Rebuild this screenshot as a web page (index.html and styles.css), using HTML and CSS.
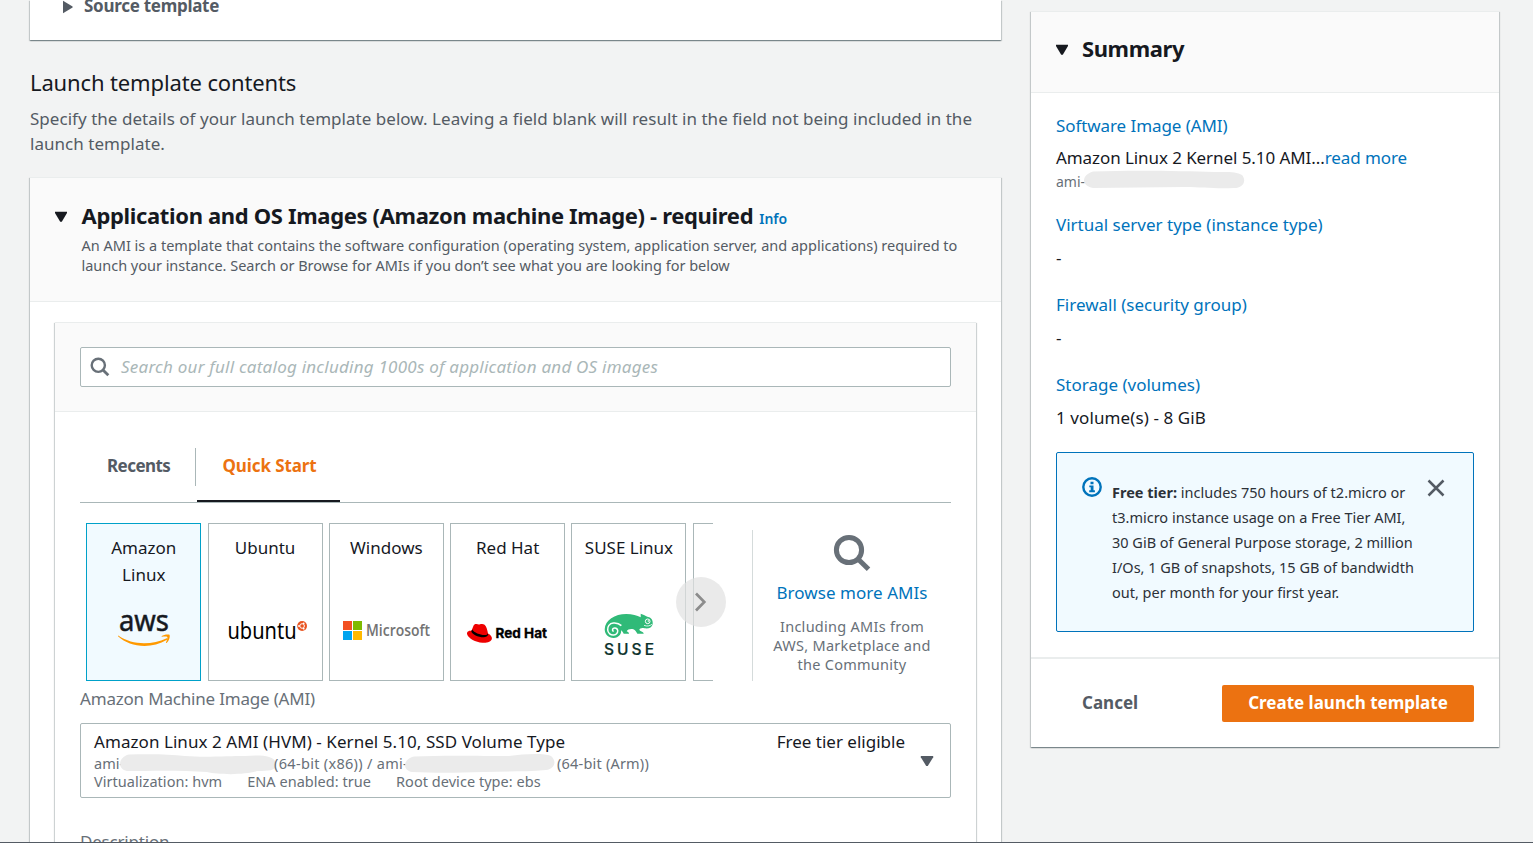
FILE: index.html
```html
<!DOCTYPE html>
<html lang="en">
<head>
<meta charset="utf-8">
<title>Create launch template</title>
<link rel="stylesheet" href="styles.css">
</head>
<body>
<div class="page">
  <main class="main">
    <section class="card source">
      <svg class="caret-right" width="12" height="14" viewBox="0 0 12 14"><path d="M1 .8 L10.6 6.6 V7.4 L1 13.2Z" fill="#545b64"/></svg>
      <span class="source-title">Source template</span>
    </section>

    <h2 class="contents-title">Launch template contents</h2>
    <p class="contents-desc">Specify the details of your launch template below. Leaving a field blank will result in the field not being included in the<br>launch template.</p>

    <section class="card images">
      <header class="images-head">
        <svg class="caret" width="14" height="12" viewBox="0 0 14 12"><path d="M1 .8H13V2L7.8 10.8H6.2L1 2Z" fill="#16191f"/></svg>
        <div>
          <h2 class="images-title"><span class="t">Application and OS Images (Amazon machine Image) - required</span><a class="info">Info</a></h2>
          <p class="images-desc">An AMI is a template that contains the software configuration (operating system, application server, and applications) required to<br><span class="l2">launch your instance. Search or Browse for AMIs if you don’t see what you are looking for below</span></p>
        </div>
      </header>

      <div class="card catalog">
        <div class="catalog-head">
          <div class="search">
            <svg width="20" height="20" viewBox="0 0 20 20" fill="none" stroke="#687078"><circle cx="8.3" cy="8.3" r="6.6" stroke-width="2.4"/><path d="M13 13l5.3 5.3" stroke-width="2.8"/></svg>
            <span class="placeholder">Search our full catalog including 1000s of application and OS images</span>
          </div>
        </div>
        <div class="catalog-body">
          <nav class="tabs">
            <a class="tab recents"><span>Recents</span></a>
            <a class="tab active"><span>Quick Start</span></a>
          </nav>
          <div class="quick">
            <div class="strip">
              <div class="tiles">
                <div class="tile selected"><span class="name">Amazon<br>Linux</span>
                  <svg viewBox="87 600 113 70"><text x="119" y="631" textLength="50" lengthAdjust="spacingAndGlyphs" class="logo-aws">aws</text><path d="M118.3 635.6C126 641 135 643.3 144 643.3C152 643.3 160 641.5 166.2 638.4C167.5 637.8 168 639 167 639.8C160 644 152 646 144.500 646C134 646 125 642.500 118 636.300Z" fill="#ff9900"/><path d="M161.500 636.200C164 634.300 168 634 169.600 634.800C170.300 637 169 641 166.600 643C166 643.300 165.800 643 166 642.500C167 640 167.800 637.600 167.300 636.900C166.600 636.100 164 636.400 161.800 636.700Z" fill="#ff9900"/></svg>
                </div>
                <div class="tile"><span class="name">Ubuntu</span>
                  <svg viewBox="208.500 600 113 70"><text x="227" y="639" textLength="69" lengthAdjust="spacingAndGlyphs" class="logo-ubuntu">ubuntu</text><circle cx="301.600" cy="626" r="4.900" fill="#e95420"/><circle cx="301.600" cy="626" r="2.300" fill="none" stroke="#fff" stroke-width="1"/><g fill="#fff"><circle cx="298.500" cy="626" r=".9"/><circle cx="303.200" cy="623.300" r=".9"/><circle cx="303.200" cy="628.700" r=".9"/></g></svg>
                </div>
                <div class="tile"><span class="name">Windows</span>
                  <svg viewBox="330 600 113 70"><path d="M343 621h9v9h-9z" fill="#f25022"/><path d="M353 621h9v9h-9z" fill="#7fba00"/><path d="M343 631h9v9h-9z" fill="#00a4ef"/><path d="M353 631h9v9h-9z" fill="#ffb900"/><text x="366" y="636" textLength="64" lengthAdjust="spacingAndGlyphs" class="logo-ms">Microsoft</text></svg>
                </div>
                <div class="tile"><span class="name">Red Hat</span>
                  <svg viewBox="451 600 113 70"><path d="M471.600 630.500L473.500 625.800C474 624.500 475.200 623.800 476.500 624C477.800 624.200 478.500 624.800 480 624.300C481.500 623.700 483.300 623.700 484.600 624.700C486.400 626 487.300 630 488 633.400C490.600 634.700 492.200 636.700 491.900 638.800C491.300 642 487 643 482.500 642.700C475.500 642.200 468.500 638.300 467.200 634.400C466.400 632 468.300 630.700 471.600 630.500Z" fill="#e00"/><path d="M472.100 629.500C474 632.500 480 635 484.500 635C486.500 635 487.600 634.500 487.900 633.200L488.100 634.600C487.700 636.400 486 637.200 483.600 637.200C478 637.200 472 634 471.300 631.400Z" fill="#000"/><text x="495.500" y="638.200" textLength="51.500" lengthAdjust="spacingAndGlyphs" class="logo-rh">Red Hat</text></svg>
                </div>
                <div class="tile"><span class="name">SUSE Linux</span>
                  <svg viewBox="572.300 600 113 70"><g transform="translate(560 510) scale(.3333)"><path d="M135 358C136 330 165 312 200 312C218 312 232 317 243 322L243 311C251 313 258 318 265 321C275 323 280 330 279 342C277 353 266 357 254 355C245 353 240 356 239 359C242 365 252 364 252 371H233C229 365 227 360 221 358C211 356 204 359 201 364C205 366 208 368 208 371H192C190 366 186 361 180 356L184 358C187 371 177 384 162 384C146 384 135 373 135 358Z" fill="#30ba78"/><path d="M185 347C179 341 171 338 161 339C149 340 143 350 144 360C145 370 153 376 162 375C170 374 175 368 174 361C173 355 166 352 161 355C157 358 158 363 162 364" fill="none" stroke="#fff" stroke-width="4.500"/><circle cx="264" cy="334" r="7" fill="none" stroke="#fff" stroke-width="3"/><circle cx="266" cy="333" r="2.500" fill="#fff"/><path d="M253 346C262 350 270 348 277 343" fill="none" stroke="#fff" stroke-width="2.500"/></g><text x="604.300" y="655.400" textLength="50" class="logo-suse">SUSE</text></svg>
                </div>
                <div class="tile"></div>
              </div>
              <span class="next"><svg width="14" height="22" viewBox="0 0 14 22"><path d="M2 2.500L10.300 11L2 19.500" fill="none" stroke="#8c8c8c" stroke-width="2.700"/></svg></span>
            </div>
            <div class="browse">
              <svg width="38" height="38" viewBox="0 0 38 38" fill="none" stroke="#687078"><circle cx="16" cy="16" r="12.600" stroke-width="5"/><path d="M25 25l10.500 10.200" stroke-width="5"/></svg>
              <a class="browse-link">Browse more AMIs</a>
              <p class="browse-text">Including AMIs from<br>AWS, Marketplace and<br>the Community</p>
            </div>
          </div>
          <div class="field-label">Amazon Machine Image (AMI)</div>
          <div class="select">
            <div class="select-text">
              <div class="ami-name">Amazon Linux 2 AMI (HVM) - Kernel 5.10, SSD Volume Type</div>
              <div class="ami-ids"><span class="ami">ami-</span><svg class="blot a" width="158" height="22" viewBox="0 0 158 22"><path d="M10 1.500C30 1 50 1 66 3C85 4.500 110 3 126 3C140 2 155 2 157 10C158 18 150 18 138 18C128 22 100 22 88 19C60 17 30 18 8 18C-2 16-1 4 10 1.500Z" fill="#ebebeb"/></svg><span class="x86">(64-bit (x86)) / ami-</span><svg class="blot b" width="152" height="22" viewBox="0 0 152 22"><path d="M10 3.500C40 2 80 3 105 3C120 1 140 0 147 3C153 8 151 16 142 17C120 19 100 18 80 19C50 20 30 20 8 19C-2 17-1 6 10 3.500Z" fill="#ebebeb"/></svg><span class="arm">(64-bit (Arm))</span></div>
              <div class="ami-meta"><span>Virtualization: hvm</span><span>ENA enabled: true</span><span>Root device type: ebs</span></div>
            </div>
            <div class="eligible">Free tier eligible</div>
            <svg class="select-caret" width="14" height="12" viewBox="0 0 14 12"><path d="M.8 1H13.200V2.200L7.800 11H6.200L.8 2.200Z" fill="#545b64"/></svg>
          </div>
          <div class="field-label description">Description</div>
        </div>
      </div>
    </section>
  </main>

  <aside class="card summary">
    <header class="summary-head">
      <svg class="caret" width="14" height="12" viewBox="0 0 14 12"><path d="M1 .8H13V2L7.800 10.800H6.200L1 2Z" fill="#16191f"/></svg>
      <h2>Summary</h2>
    </header>
    <div class="summary-body">
      <div class="item first">
        <a class="tight">Software Image (AMI)</a>
        <div class="value tight">Amazon Linux 2 Kernel 5.10 AMI...<a>read more</a></div>
        <div class="summary-ami"><span>ami-</span><svg width="162" height="20" viewBox="0 0 162 20"><path d="M9 1.500C50 0 100 1 130 2C140 2 152 1 158 5C163 11 159 18 150 18C130 19 120 17 100 17C70 17 40 18 9 18C-3 16-3 5 9 1.500Z" fill="#ebebeb"/></svg></div>
      </div>
      <div class="item"><a>Virtual server type (instance type)</a><div class="value">-</div></div>
      <div class="item"><a>Firewall (security group)</a><div class="value">-</div></div>
      <div class="item"><a>Storage (volumes)</a><div class="value loose">1 volume(s) - 8 GiB</div></div>
      <div class="alert">
        <svg class="alert-icon" width="20" height="20" viewBox="0 0 20 20"><circle cx="10" cy="10" r="8.700" fill="none" stroke="#0073bb" stroke-width="2.400"/><path d="M8.500 4.800h3v2.500h-3zM7.300 8.500h4.200v4.800h1.400v1.900H7.200v-1.900h1.500v-3H7.300z" fill="#0073bb"/></svg>
        <p class="alert-text"><b>Free tier:</b> includes 750 hours of t2.micro or<br>t3.micro instance usage on a Free Tier AMI,<br>30 GiB of General Purpose storage, 2 million<br>I/Os, 1 GB of snapshots, 15 GB of bandwidth<br>out, per month for your first year.</p>
        <svg class="alert-close" width="18" height="18" viewBox="0 0 18 18"><path d="M1.500 1.500l15 15M16.500 1.500l-15 15" stroke="#545b64" stroke-width="2.500"/></svg>
      </div>
    </div>
    <footer class="summary-foot">
      <a class="cancel">Cancel</a>
      <a class="create"><span>Create launch template</span></a>
    </footer>
  </aside>
</div>
</body>
</html>
```
FILE: styles.css
```css
* { box-sizing: border-box; }
body {
  margin: 0;
  background: #f2f3f3;
  color: #16191f;
  font: 17px/25px "Noto Sans", "Open Sans", sans-serif;
}
h2, p { margin: 0; }
svg { display: block; flex: none; }
a { color: #0073bb; text-decoration: none; }

.page {
  width: 1533px;
  height: 843px;
  overflow: hidden;
  display: flex;
  align-items: flex-start;
  gap: 30px;
  padding-left: 30px;
  border-bottom: 1px solid #545b64;
  white-space: nowrap;
}
.main { width: 971px; flex: none; }
.card {
  background: #fff;
  border-top: 1px solid #eaeded;
  box-shadow: 0 1px 1px 0 rgba(0, 28, 36, .3), 1px 1px 1px 0 rgba(0, 28, 36, .15), -1px 1px 1px 0 rgba(0, 28, 36, .15);
}

.source {
  height: 40px;
  border-top: 0;
  display: flex;
  align-items: flex-start;
  padding-left: 32px;
}
.source-title { margin: -7px 0 0 10px; font-weight: 700; color: #545b64; letter-spacing: -.28px; }

.contents-title { margin-top: 27px; font-size: 22px; line-height: 30px; font-weight: 400; letter-spacing: -.13px; }
.contents-desc { margin-top: 9px; color: #545b64; letter-spacing: .037px; }

.images { margin-top: 21px; height: 700px; }
.images-head {
  height: 124px;
  display: flex;
  padding: 21px 0 0 24px;
  background: #fafafa;
  border-bottom: 1px solid #eaeded;
}
.images-head .caret { margin: 12px 13.5px 0 0; }
.images-title { display: flex; align-items: baseline; font-size: 22px; line-height: 32px; letter-spacing: -.34px; }
.info { margin-left: 6px; font-size: 14px; font-weight: 600; letter-spacing: 0; }
.images-desc { margin-top: 0; font-size: 14.5px; line-height: 20px; color: #545b64; }
.images-desc .l2 { letter-spacing: -.02px; }

.catalog { margin: 20px 25px 0; height: 560px; }
.catalog-head { height: 89px; padding: 24px 25px 0; background: #fafafa; border-bottom: 1px solid #eaeded; }
.search {
  height: 40px;
  display: flex;
  align-items: center;
  padding-left: 9px;
  gap: 11px;
  background: #fff;
  border: 1px solid #aab7b8;
  border-radius: 2px;
}
.placeholder { margin-top: -2px; color: #aab7b8; font-style: italic; letter-spacing: .235px; }
.catalog-body { padding: 36px 25px 0; }

.tabs { height: 55px; display: flex; border-bottom: 1px solid #aab7b8; font-weight: 700; }
.tab { color: #545b64; line-height: 36px; }
.recents { width: 116px; height: 38px; padding-left: 27px; border-right: 1px solid #aab7b8; letter-spacing: -.55px; }
.active { width: 143px; height: 54px; margin-left: 1px; padding-left: 25.5px; color: #ec7211; border-bottom: 2px solid #16191f; letter-spacing: -.1px; }

.quick { display: flex; margin-top: 20px; height: 158px; }
.strip { position: relative; width: 633px; padding-left: 6.25px; }
.tiles { display: flex; gap: 6.3px; overflow: hidden; }
.tile {
  flex: none;
  width: 115px;
  height: 158px;
  border: 1px solid #aab7b8;
  padding-top: 10px;
  display: flex;
  flex-direction: column;
  justify-content: space-between;
  text-align: center;
  line-height: 27px;
}
.tile svg { width: 113px; height: 70px; margin-bottom: 10px; }
.selected { background: #f1faff; border-color: #00a1c9; }
.next {
  position: absolute;
  left: 596px;
  top: 54px;
  width: 50px;
  height: 50px;
  padding: 14px 0 0 18px;
  border-radius: 50%;
  background: rgba(225, 225, 225, .7);
}
.logo-aws { font: 400 29px "Noto Sans", sans-serif; fill: #16191f; stroke: #16191f; stroke-width: .5px; }
.logo-ubuntu { font: 400 23px "Noto Sans", sans-serif; fill: #000; }
.logo-ms { font: 600 16px "Open Sans", sans-serif; fill: #737373; }
.logo-rh { font: 700 13.5px Inter, sans-serif; fill: #000; stroke: #000; stroke-width: .3px; }
.logo-suse { font: 500 15.5px Inter, sans-serif; fill: #0c322c; stroke: #0c322c; stroke-width: .2px; }

.browse {
  flex: 1;
  margin: 7px 0 0 39px;
  padding-top: 4px;
  border-left: 1px solid #d5dbdb;
  display: flex;
  flex-direction: column;
  align-items: center;
  text-align: center;
}
.browse-link { margin-top: 8px; line-height: 26px; letter-spacing: .05px; }
.browse-text { margin-top: 11px; font-size: 14.5px; line-height: 19px; color: #687078; letter-spacing: .27px; }

.field-label { margin-top: 5px; height: 26px; line-height: 26px; color: #687078; letter-spacing: -.19px; }
.select {
  margin-top: 11px;
  height: 75px;
  border: 1px solid #aab7b8;
  border-radius: 2px;
  display: flex;
  padding: 5px 16px 0 13px;
}
.select-text { flex: 1; }
.ami-name, .eligible { line-height: 25px; }
.ami-name { letter-spacing: .065px; }
.ami-ids { display: flex; height: 18px; line-height: 19px; font-size: 14.5px; color: #687078; }
.blot { margin-top: -1px; }
.blot.a { margin-left: -5px; }
.blot.b { margin-left: -4px; }
.x86 { margin-left: -3px; letter-spacing: .3px; }
.arm { margin-left: 1px; letter-spacing: .2px; }
.ami-meta { display: flex; gap: 25px; line-height: 18px; font-size: 14.5px; color: #687078; letter-spacing: .04px; }
.select-caret { margin: 26px 0 0 15px; }
.description { margin-top: 31px; }

.summary { width: 468px; height: 736px; margin-top: 11px; flex: none; }
.summary-head {
  height: 81px;
  display: flex;
  padding: 21px 0 0 24px;
  background: #fafafa;
  border-bottom: 1px solid #eaeded;
}
.summary-head .caret { margin: 11px 13px 0 0; }
.summary-head h2 { font-size: 22px; line-height: 31px; letter-spacing: -.4px; }
.summary-body { height: 564px; padding: 20px 25px 0; }
.item { display: flex; flex-direction: column; align-items: flex-start; gap: 8px; margin-bottom: 22px; }
.item.first { gap: 7px; margin-bottom: 18px; }
.tight { letter-spacing: -.08px; }
.loose { letter-spacing: .1px; }
.summary-ami { display: flex; height: 24px; margin-top: -7px; line-height: 24px; font-size: 14px; color: #687078; }
.summary-ami svg { margin-left: -1px; }
.alert {
  height: 180px;
  display: flex;
  border: 1px solid #0073bb;
  border-radius: 2px;
  background: #f1faff;
  padding: 24px 28px 0 25px;
}
.alert-icon { margin-right: 10px; }
.alert-text { flex: 1; margin-top: 3px; font-size: 14.5px; color: #2c3138; }
.alert-close { margin-top: 2px; }
.summary-foot {
  height: 90px;
  border-top: 2px solid #eaeded;
  display: flex;
  justify-content: space-between;
  padding: 26px 25px 0 51px;
  font-weight: 700;
  line-height: 36px;
}
.cancel { color: #545b64; }
.create { width: 252px; height: 37px; border-radius: 2px; background: #ec7211; color: #fff; text-align: center; }
```
